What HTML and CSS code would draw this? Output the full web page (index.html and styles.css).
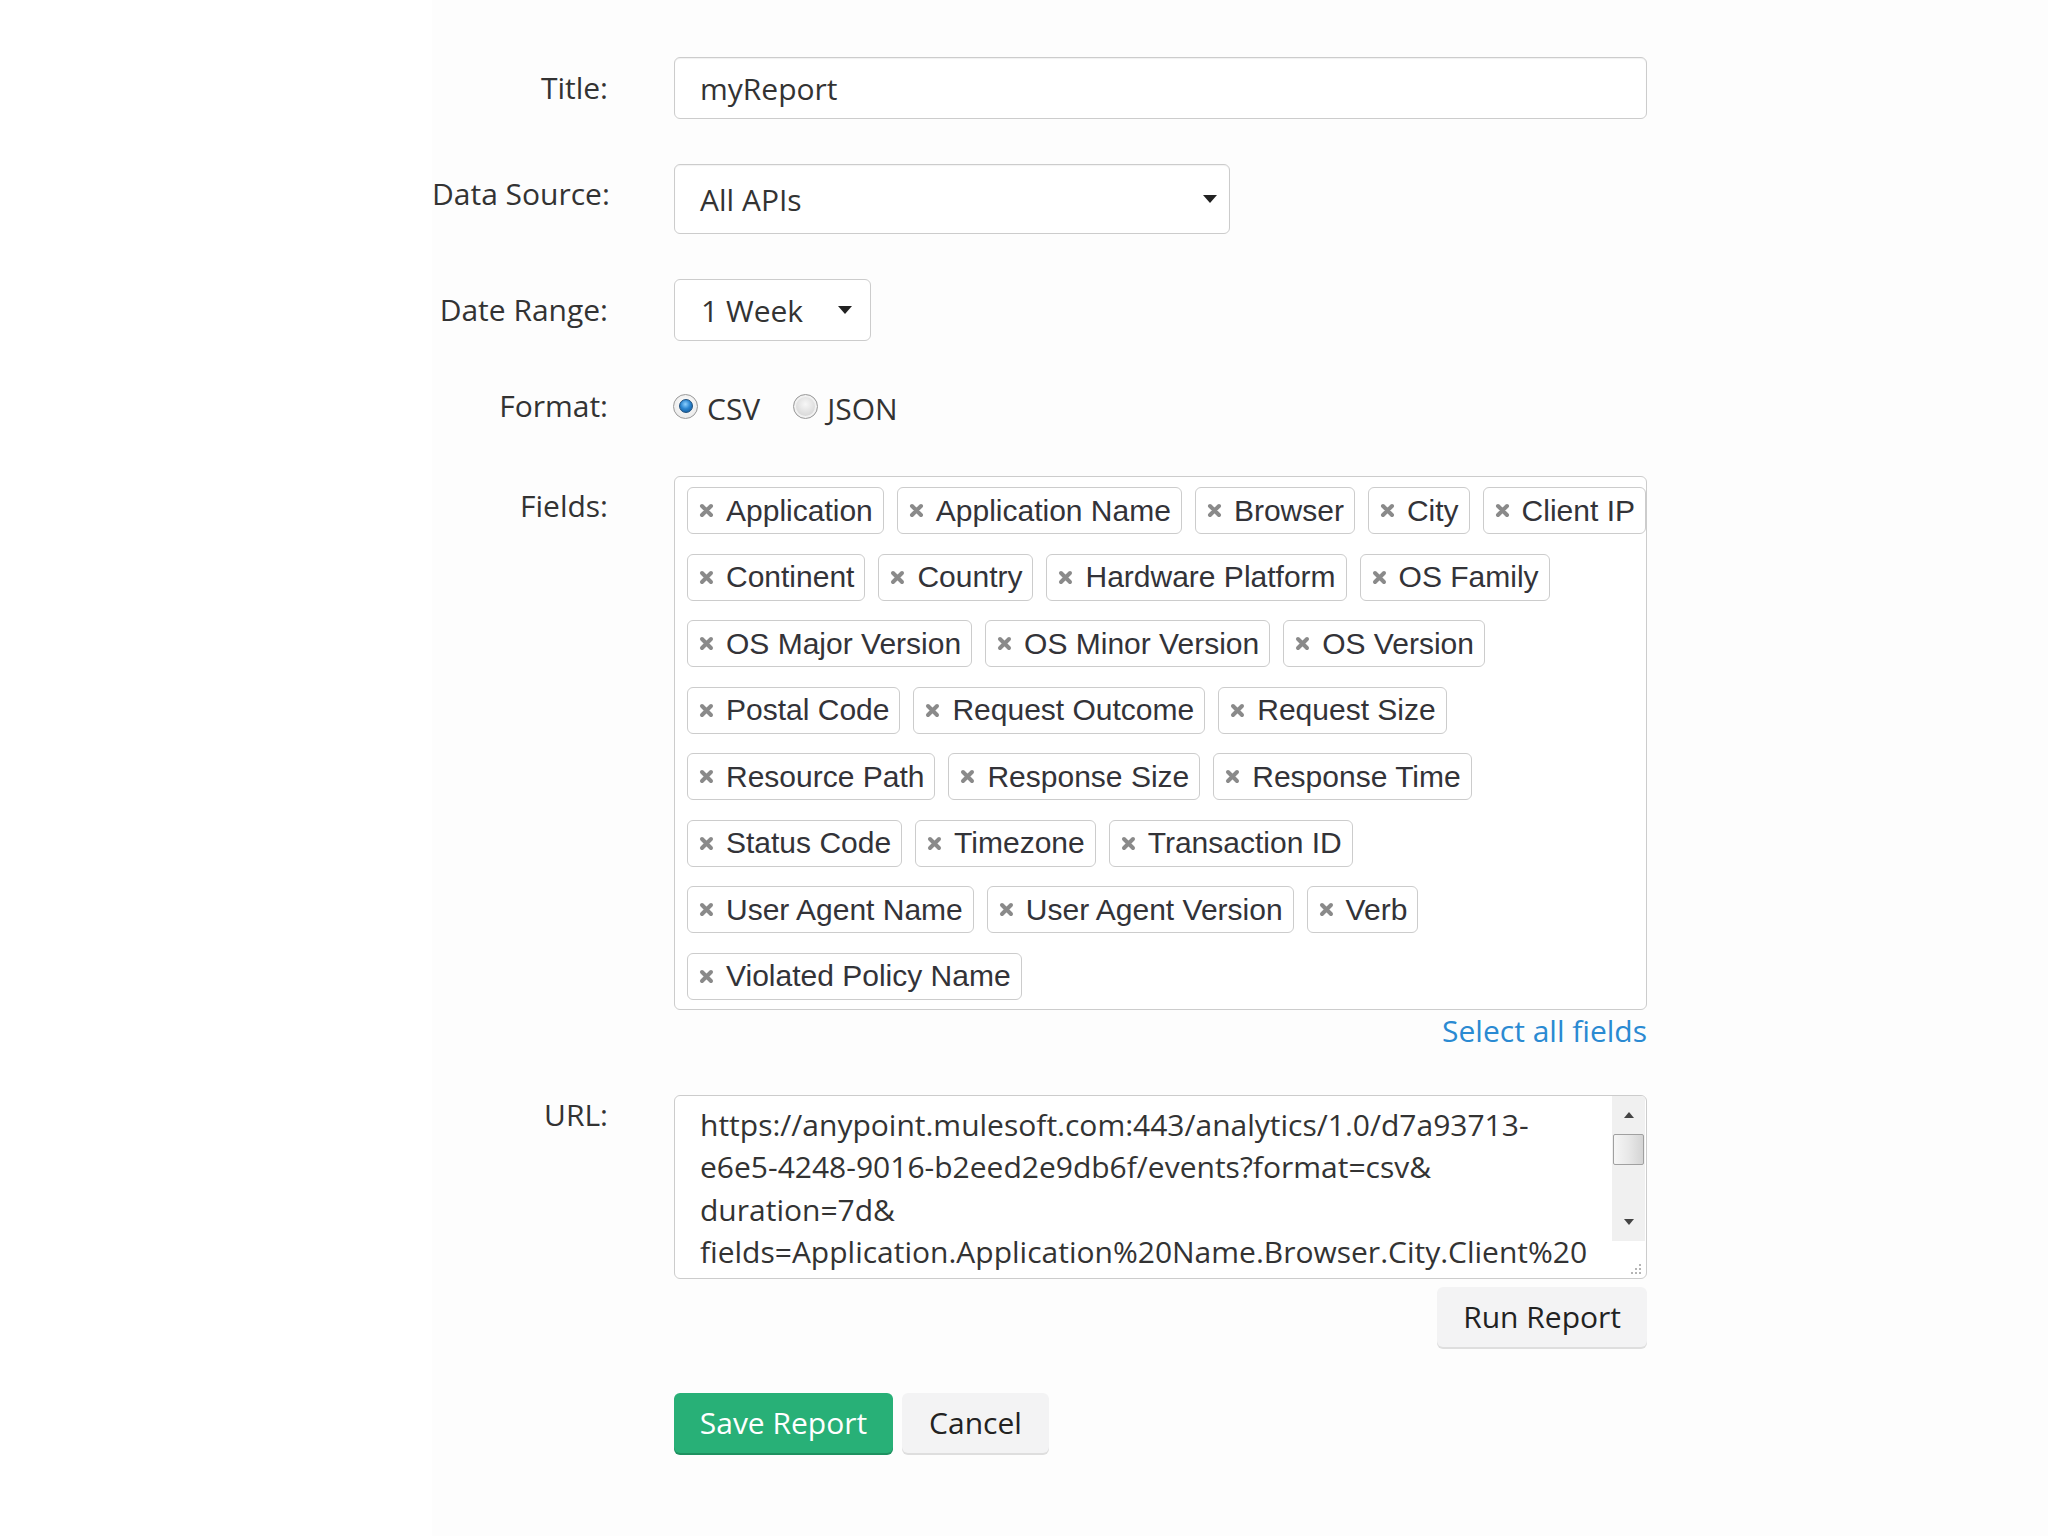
FILE: index.html
```html
<!DOCTYPE html>
<html lang="en">
<head>
<meta charset="utf-8">
<title>Report</title>
<link rel="stylesheet" href="styles.css">
</head>
<body>
<div class="page">
  <div class="gutter"></div>
  <main class="panel">
    <form class="report-form">
      <div class="row row-title">
        <label class="lbl lbl-pad">Title:</label>
        <div class="text-input">myReport</div>
      </div>

      <div class="row row-source">
        <label class="lbl lbl-pad">Data Source:</label>
        <div class="select select-source">
          <span>All APIs</span>
          <svg class="caret" width="14" height="8" viewBox="0 0 14 8"><path d="M0 0H14L7 8Z" fill="#222"/></svg>
        </div>
      </div>

      <div class="row row-range">
        <label class="lbl lbl-pad">Date Range:</label>
        <div class="select select-range">
          <span>1 Week</span>
          <svg class="caret" width="14" height="8" viewBox="0 0 14 8"><path d="M0 0H14L7 8Z" fill="#222"/></svg>
        </div>
      </div>

      <div class="row row-format">
        <label class="lbl">Format:</label>
        <div class="radios">
          <span class="radio checked"><span class="dot"></span></span><span class="radio-text">CSV</span>
          <span class="radio unchecked"></span><span class="radio-text">JSON</span>
        </div>
      </div>

      <div class="row row-fields">
        <label class="lbl lbl-pad">Fields:</label>
        <div class="fields-col">
          <div class="fields-box">
            <div class="tag-row">
              <span class="tag"><svg class="x" viewBox="0 0 15 15"><path d="M3 3L12 12M12 3L3 12"/></svg>Application</span>
              <span class="tag"><svg class="x" viewBox="0 0 15 15"><path d="M3 3L12 12M12 3L3 12"/></svg>Application Name</span>
              <span class="tag"><svg class="x" viewBox="0 0 15 15"><path d="M3 3L12 12M12 3L3 12"/></svg>Browser</span>
              <span class="tag"><svg class="x" viewBox="0 0 15 15"><path d="M3 3L12 12M12 3L3 12"/></svg>City</span>
              <span class="tag"><svg class="x" viewBox="0 0 15 15"><path d="M3 3L12 12M12 3L3 12"/></svg>Client IP</span>
            </div>
            <div class="tag-row">
              <span class="tag"><svg class="x" viewBox="0 0 15 15"><path d="M3 3L12 12M12 3L3 12"/></svg>Continent</span>
              <span class="tag"><svg class="x" viewBox="0 0 15 15"><path d="M3 3L12 12M12 3L3 12"/></svg>Country</span>
              <span class="tag"><svg class="x" viewBox="0 0 15 15"><path d="M3 3L12 12M12 3L3 12"/></svg>Hardware Platform</span>
              <span class="tag"><svg class="x" viewBox="0 0 15 15"><path d="M3 3L12 12M12 3L3 12"/></svg>OS Family</span>
            </div>
            <div class="tag-row">
              <span class="tag"><svg class="x" viewBox="0 0 15 15"><path d="M3 3L12 12M12 3L3 12"/></svg>OS Major Version</span>
              <span class="tag"><svg class="x" viewBox="0 0 15 15"><path d="M3 3L12 12M12 3L3 12"/></svg>OS Minor Version</span>
              <span class="tag"><svg class="x" viewBox="0 0 15 15"><path d="M3 3L12 12M12 3L3 12"/></svg>OS Version</span>
            </div>
            <div class="tag-row">
              <span class="tag"><svg class="x" viewBox="0 0 15 15"><path d="M3 3L12 12M12 3L3 12"/></svg>Postal Code</span>
              <span class="tag"><svg class="x" viewBox="0 0 15 15"><path d="M3 3L12 12M12 3L3 12"/></svg>Request Outcome</span>
              <span class="tag"><svg class="x" viewBox="0 0 15 15"><path d="M3 3L12 12M12 3L3 12"/></svg>Request Size</span>
            </div>
            <div class="tag-row">
              <span class="tag"><svg class="x" viewBox="0 0 15 15"><path d="M3 3L12 12M12 3L3 12"/></svg>Resource Path</span>
              <span class="tag"><svg class="x" viewBox="0 0 15 15"><path d="M3 3L12 12M12 3L3 12"/></svg>Response Size</span>
              <span class="tag"><svg class="x" viewBox="0 0 15 15"><path d="M3 3L12 12M12 3L3 12"/></svg>Response Time</span>
            </div>
            <div class="tag-row">
              <span class="tag"><svg class="x" viewBox="0 0 15 15"><path d="M3 3L12 12M12 3L3 12"/></svg>Status Code</span>
              <span class="tag"><svg class="x" viewBox="0 0 15 15"><path d="M3 3L12 12M12 3L3 12"/></svg>Timezone</span>
              <span class="tag"><svg class="x" viewBox="0 0 15 15"><path d="M3 3L12 12M12 3L3 12"/></svg>Transaction ID</span>
            </div>
            <div class="tag-row">
              <span class="tag"><svg class="x" viewBox="0 0 15 15"><path d="M3 3L12 12M12 3L3 12"/></svg>User Agent Name</span>
              <span class="tag"><svg class="x" viewBox="0 0 15 15"><path d="M3 3L12 12M12 3L3 12"/></svg>User Agent Version</span>
              <span class="tag"><svg class="x" viewBox="0 0 15 15"><path d="M3 3L12 12M12 3L3 12"/></svg>Verb</span>
            </div>
            <div class="tag-row">
              <span class="tag"><svg class="x" viewBox="0 0 15 15"><path d="M3 3L12 12M12 3L3 12"/></svg>Violated Policy Name</span>
            </div>
          </div>
          <a class="select-all" href="#">Select all fields</a>
        </div>
      </div>

      <div class="row row-url">
        <label class="lbl">URL:</label>
        <div class="url-col">
          <div class="url-box">
            <div class="url-text">
              <span class="url-line">https://anypoint.mulesoft.com:443/analytics/1.0/d7a93713-</span>
              <span class="url-line">e6e5-4248-9016-b2eed2e9db6f/events?format=csv&amp;</span>
              <span class="url-line">duration=7d&amp;</span>
              <span class="url-line">fields=Application.Application%20Name.Browser.City.Client%20</span>
            </div>
            <div class="scrollbar">
              <div class="sb-btn"><svg width="10" height="6" viewBox="0 0 10 6"><path d="M0 6H10L5 0Z" fill="#444"/></svg></div>
              <div class="sb-thumb"></div>
              <div class="sb-track"></div>
              <div class="sb-btn"><svg width="10" height="6" viewBox="0 0 10 6"><path d="M0 0H10L5 6Z" fill="#444"/></svg></div>
            </div>
            <svg class="grip" width="14" height="14" viewBox="0 0 14 14">
              <g fill="#b5b5b5">
                <rect x="11" y="3" width="2" height="2"/>
                <rect x="7" y="7" width="2" height="2"/><rect x="11" y="7" width="2" height="2"/>
                <rect x="3" y="11" width="2" height="2"/><rect x="7" y="11" width="2" height="2"/><rect x="11" y="11" width="2" height="2"/>
              </g>
            </svg>
          </div>
          <div class="run-wrap">
            <button type="button" class="btn btn-light">Run Report</button>
          </div>
        </div>
      </div>

      <div class="row row-actions">
        <span class="lbl"></span>
        <div class="actions">
          <button type="button" class="btn btn-green">Save Report</button>
          <button type="button" class="btn btn-light">Cancel</button>
        </div>
      </div>
    </form>
  </main>
</div>
</body>
</html>
```

FILE: styles.css
```css
* { box-sizing: border-box; }

html, body {
  margin: 0;
  padding: 0;
  background: #ffffff;
}

body {
  font-family: "Open Sans", "Liberation Sans", sans-serif;
  font-size: 30px;
  color: #333333;
}

.page {
  display: flex;
  min-height: 1536px;
}

.gutter {
  width: 432px;
  flex: none;
  background: #ffffff;
}

.panel {
  flex: 1;
  background: #fdfdfd;
}

.report-form {
  display: flex;
  flex-direction: column;
}

.row {
  display: grid;
  grid-template-columns: 176px 973px;
  column-gap: 66px;
  align-items: start;
}

.lbl {
  text-align: right;
  line-height: 40px;
  color: #333333;
  white-space: nowrap;
}

.lbl-pad { padding-top: 11px; }

.row-title { margin-top: 57px; }
.row-source { margin-top: 45px; }
.row-source .lbl-pad { padding-top: 10px; }
.row-range { margin-top: 45px; }
.row-format { margin-top: 45px; align-items: center; }
.row-fields { margin-top: 50px; }
.row-fields .lbl-pad { padding-top: 10px; }
.row-url { margin-top: 44px; }
.row-actions { margin-top: 46px; }

/* title input */
.text-input {
  height: 62px;
  border: 1px solid #cccccc;
  border-radius: 6px;
  background: #ffffff;
  box-shadow: inset 0 1px 1px rgba(0, 0, 0, 0.06);
  padding: 0 25px;
  display: flex;
  align-items: center;
  color: #333333;
}

/* selects */
.select {
  display: flex;
  align-items: center;
  justify-content: space-between;
  border: 1px solid #cccccc;
  border-radius: 6px;
  background: #ffffff;
  color: #333333;
  padding-left: 25px;
}

.select-source {
  width: 556px;
  height: 70px;
  padding-right: 12px;
  box-shadow: inset 0 1px 1px rgba(0, 0, 0, 0.05);
}

.select-range {
  width: 197px;
  height: 62px;
  padding-left: 26px;
  padding-right: 18px;
}

.caret { display: block; flex: none; }

/* radios */
.radios {
  display: flex;
  align-items: center;
  height: 40px;
}

.radio {
  width: 25px;
  height: 25px;
  border-radius: 50%;
  border: 1px solid #9a9a9a;
  display: flex;
  align-items: center;
  justify-content: center;
  flex: none;
  margin-left: -1px;
}

.radio.checked {
  background: radial-gradient(circle at 50% 40%, #ffffff 0%, #e4e4e4 100%);
}

.radio .dot {
  width: 14px;
  height: 14px;
  border-radius: 50%;
  background: radial-gradient(circle at 45% 35%, #8cd0ff 0%, #2b86d1 45%, #0d4f8c 100%);
  border: 1px solid #1d4f7d;
}

.radio.unchecked {
  background: radial-gradient(circle at 50% 40%, #f7f7f7 0%, #d4d4d4 75%, #c4c4c4 100%);
  box-shadow: inset 0 0 0 2px #f1f1f1;
  margin-left: 33px;
}

.radio-text {
  margin-left: 9px;
  padding-top: 4px;
  color: #333333;
}

/* fields */
.fields-col {
  display: flex;
  flex-direction: column;
}

.fields-box {
  border: 1px solid #cccccc;
  border-radius: 6px;
  background: #ffffff;
  padding: 10px 2px 9px 12px;
  display: flex;
  flex-direction: column;
  gap: 19.5px;
}

.tag-row {
  display: flex;
  gap: 13px;
}

.tag {
  display: inline-flex;
  align-items: center;
  gap: 12px;
  height: 47px;
  border: 1px solid #cccccc;
  border-radius: 6px;
  background: #ffffff;
  padding: 0 10px 0 11px;
  font-family: "Liberation Sans", Arial, sans-serif;
  font-size: 30px;
  color: #333338;
  white-space: nowrap;
}

.tag .x {
  width: 15px;
  height: 15px;
  flex: none;
  stroke: #8a8a8a;
  stroke-width: 4;
  stroke-linecap: round;
  fill: none;
}

.select-all {
  align-self: flex-end;
  margin-top: 1px;
  line-height: 40px;
  color: #2a8ad2;
  text-decoration: none;
}

/* url */
.url-col {
  display: flex;
  flex-direction: column;
}

.url-box {
  position: relative;
  height: 184px;
  border: 1px solid #cccccc;
  border-radius: 6px;
  background: #ffffff;
  display: flex;
  overflow: hidden;
}

.url-text {
  flex: 1;
  padding: 8px 0 0 25px;
  line-height: 42.5px;
  overflow: hidden;
  white-space: nowrap;
  color: #333333;
}

.url-line { display: block; }

.scrollbar {
  width: 33px;
  height: 145px;
  flex: none;
  margin-right: 1px;
  background: #f0f0f0;
  display: flex;
  flex-direction: column;
  align-items: center;
}

.sb-btn {
  height: 38px;
  width: 100%;
  display: flex;
  align-items: center;
  justify-content: center;
  flex: none;
}

.sb-thumb {
  width: 31px;
  height: 31px;
  margin-left: -1px;
  flex: none;
  border: 1px solid #a0a0a0;
  border-radius: 2px;
  background: linear-gradient(to right, #f6f6f6 0%, #e8e8e8 50%, #d4d4d4 100%);
}

.sb-track { flex: 1; }

.grip {
  position: absolute;
  right: 4px;
  bottom: 3px;
}

.run-wrap {
  display: flex;
  justify-content: flex-end;
  margin-top: 8px;
}

/* buttons */
.btn {
  font-family: "Open Sans", "Liberation Sans", sans-serif;
  font-size: 30px;
  border: none;
  border-radius: 6px;
  cursor: pointer;
  display: inline-flex;
  align-items: center;
  justify-content: center;
}

.btn-light {
  height: 60px;
  padding: 0 26px;
  background: #f3f3f4;
  color: #222222;
  box-shadow: 0 2px 0 #dedede;
}

.btn-green {
  height: 60px;
  width: 219px;
  background: #28b077;
  color: #ffffff;
  box-shadow: 0 2px 0 #1e9160;
}

.actions {
  display: flex;
  gap: 9px;
}

.actions .btn-light {
  width: 147px;
  padding: 0;
}
```
